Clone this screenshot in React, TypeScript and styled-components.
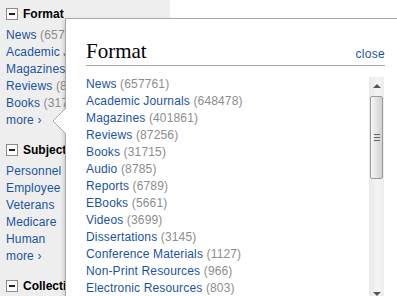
import React from 'react';
import styled, { createGlobalStyle } from 'styled-components';

const Global = createGlobalStyle`
  html, body { margin: 0; padding: 0; background: #fff; }
  body { font-family: "Liberation Sans", Arial, sans-serif; overflow: hidden; }
`;

const Page = styled.div`
  position: relative;
  width: 397px;
  height: 296px;
  overflow: hidden;
`;

const Sidebar = styled.div`
  width: 164px;
  height: 296px;
  padding: 6px 0 0 6px;
  background: #eeeeee;
  box-sizing: content-box;
`;

const Section = styled.div`
  margin-bottom: 13px;
`;

const SectionHead = styled.div`
  display: flex;
  align-items: center;
  gap: 5px;
  height: 16px;
  margin-bottom: 5px;
  font-size: 12px;
  font-weight: bold;
  color: #000;
  white-space: nowrap;
`;

const Toggle = styled.span`
  position: relative;
  width: 10px;
  height: 10px;
  border: 1px solid #8a8a8a;
  background: #fafafa;
  flex: none;
  &::after {
    content: '';
    position: absolute;
    left: 2px;
    right: 2px;
    top: 4px;
    height: 2px;
    background: #222;
  }
`;

const Link = styled.div`
  font-size: 12px;
  letter-spacing: 0.15px;
  line-height: 17px;
  color: #1b53a0;
  white-space: nowrap;
`;

const Count = styled.span`
  color: #8c8c8c;
`;

const Popup = styled.div`
  position: absolute;
  left: 65px;
  top: 18px;
  width: 345px;
  height: 300px;
  background: #fff;
  border: 1px solid #a9a9a9;
  box-shadow: -1px 2px 4px rgba(0, 0, 0, 0.18);
  padding: 0 24px 0 20px;
  box-sizing: border-box;
`;

const Arrow = styled.svg`
  position: absolute;
  left: -14px;
  top: 89px;
`;

const Header = styled.div`
  display: flex;
  justify-content: space-between;
  align-items: baseline;
  height: 47px;
  padding-top: 20px;
  box-sizing: border-box;
  border-bottom: 1px solid #a8a8a8;
`;

const Title = styled.h2`
  margin: 0;
  font-family: "Liberation Serif", "Times New Roman", serif;
  font-weight: normal;
  font-size: 21px;
  line-height: 24px;
  color: #000;
`;

const Close = styled.span`
  font-size: 12px;
  letter-spacing: 0.3px;
  color: #1b53a0;
`;

const Body = styled.div`
  display: flex;
  justify-content: space-between;
  padding-top: 10px;
`;

const List = styled.div`
  display: flex;
  flex-direction: column;
`;

const Scrollbar = styled.div`
  display: flex;
  flex-direction: column;
  align-items: center;
  width: 15px;
  height: 225px;
  margin-top: 1px;
  margin-right: 1px;
  background: linear-gradient(to right, #e9e9e9, #f4f4f4 60%, #ececec);
`;

const ScrollArrow = styled.div<{ $down?: boolean }>`
  display: flex;
  align-items: center;
  justify-content: center;
  height: 17px;
  width: 15px;
  &::before {
    content: '';
    border-left: 4px solid transparent;
    border-right: 4px solid transparent;
    ${(p) => (p.$down ? 'border-top: 4px solid #555;' : 'border-bottom: 4px solid #555;')}
  }
`;

const Thumb = styled.div`
  display: flex;
  flex-direction: column;
  justify-content: center;
  align-items: center;
  gap: 1px;
  width: 13px;
  height: 83px;
  margin: 2px 0 auto;
  border: 1px solid #9a9a9a;
  border-radius: 2px;
  box-sizing: border-box;
  background: linear-gradient(to right, #f6f6f6, #e4e4e4 50%, #cfcfcf);
`;

const Grip = styled.span`
  width: 6px;
  height: 1px;
  background: #666;
  border-bottom: 1px solid #ddd;
`;

const formats: [string, number][] = [
  ['News', 657761],
  ['Academic Journals', 648478],
  ['Magazines', 401861],
  ['Reviews', 87256],
  ['Books', 31715],
  ['Audio', 8785],
  ['Reports', 6789],
  ['EBooks', 5661],
  ['Videos', 3699],
  ['Dissertations', 3145],
  ['Conference Materials', 1127],
  ['Non-Print Resources', 966],
  ['Electronic Resources', 803],
];

const subjects = ['Personnel', 'Employee', 'Veterans', 'Medicare', 'Human'];

export default function App() {
  return (
    <Page>
      <Global />
      <Sidebar>
        <Section>
          <SectionHead><Toggle />Format</SectionHead>
          {formats.slice(0, 5).map(([name, n]) => (
            <Link key={name}>{name} <Count>({n})</Count></Link>
          ))}
          <Link>more ›</Link>
        </Section>
        <Section>
          <SectionHead><Toggle />Subject</SectionHead>
          {subjects.map((s) => (
            <Link key={s}>{s}</Link>
          ))}
          <Link>more ›</Link>
        </Section>
        <Section>
          <SectionHead><Toggle />Collection</SectionHead>
        </Section>
      </Sidebar>

      <Popup>
        <Arrow width="15" height="26" viewBox="0 0 15 26">
          <polygon points="14,0 1,13 14,26" fill="#fff" />
          <polyline points="14,0 1,13 14,26" fill="none" stroke="#a9a9a9" strokeWidth="1" />
        </Arrow>
        <Header>
          <Title>Format</Title>
          <Close>close</Close>
        </Header>
        <Body>
          <List>
            {formats.map(([name, n]) => (
              <Link key={name}>{name} <Count>({n})</Count></Link>
            ))}
          </List>
          <Scrollbar>
            <ScrollArrow />
            <Thumb>
              <Grip />
              <Grip />
              <Grip />
            </Thumb>
            <ScrollArrow $down />
          </Scrollbar>
        </Body>
      </Popup>
    </Page>
  );
}
